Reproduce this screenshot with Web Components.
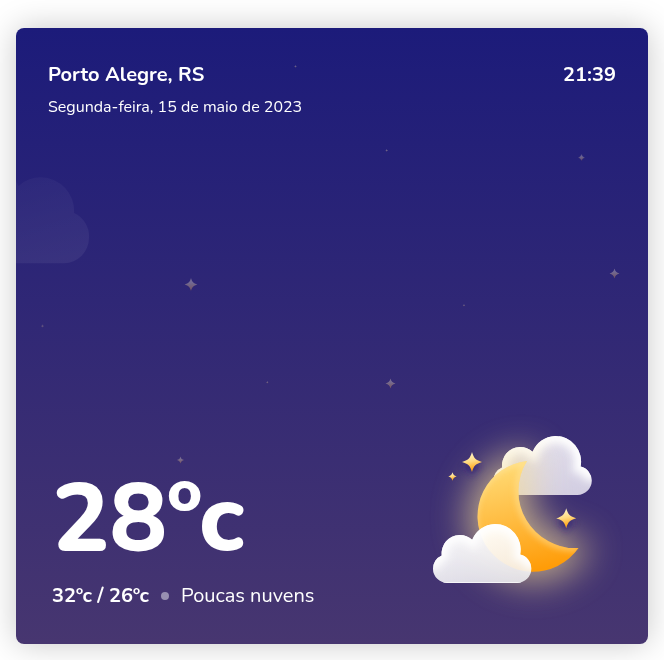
<!DOCTYPE html>
<html lang="pt-BR">
<head>
<meta charset="utf-8">
<meta name="viewport" content="width=device-width, initial-scale=1">
<title>Clima</title>
<style>
  * { box-sizing: border-box; }
  body {
    margin: 0;
    padding: 28px 16px 16px;
    min-height: 100vh;
    display: flex;
    background: #fff;
    color: #fff;
    font-family: Nunito, "Open Sans", "Noto Sans", sans-serif;
  }
</style>
</head>
<body>
<weather-card>
  <weather-sky slot="sky"></weather-sky>
  <weather-place slot="header">
    <span slot="city">Porto Alegre, RS</span>
    <span slot="date">Segunda-feira, 15 de maio de 2023</span>
    <time slot="time" datetime="21:39">21:39</time>
  </weather-place>
  <weather-now slot="now">
    <span slot="temp">28ºc</span>
    <span slot="range">32ºc / 26ºc</span>
    <span slot="summary">Poucas nuvens</span>
  </weather-now>
  <weather-icon slot="now"></weather-icon>
</weather-card>

<script>
const CLOUD = "M14.3 59 A14.3 14.3 0 0 1 0 44.8 A14.3 14.3 0 0 1 8.7 31.4 A18.4 18.4 0 0 1 26.3 11 A18.4 18.4 0 0 1 39.2 15.8 A25.6 25.6 0 0 1 61.7 0 A25.6 25.6 0 0 1 87.2 30.6 A14.3 14.3 0 0 1 98.3 44.8 A14.3 14.3 0 0 1 84 59 Z";
const CLOUD_TOP = "M0 44.8 A14.3 14.3 0 0 1 8.7 31.4 A18.4 18.4 0 0 1 26.3 11 A18.4 18.4 0 0 1 39.2 15.8 A25.6 25.6 0 0 1 61.7 0 A25.6 25.6 0 0 1 87.2 30.6 A14.3 14.3 0 0 1 98.3 44.8";
const MOON = "M527 461 A55.5 55.5 0 1 0 578.5 548 A57 57 0 0 1 527 461 Z";
const STAR = "M0 -10 C1.6 -4 4 -1.6 10 0 C4 1.6 1.6 4 0 10 C-1.6 4 -4 1.6 -10 0 C-4 -1.6 -1.6 -4 0 -10 Z";

function define(name, html) {
  const template = document.createElement("template");
  template.innerHTML = html;
  customElements.define(name, class extends HTMLElement {
    constructor() {
      super();
      this.attachShadow({ mode: "open" }).append(template.content.cloneNode(true));
    }
  });
}

define("weather-card", `
  <style>
    :host {
      position: relative;
      flex: 1;
      min-width: 0;
      display: flex;
      flex-direction: column;
      justify-content: space-between;
      gap: 32px;
      padding: 32px;
      border-radius: 8px;
      background: linear-gradient(#1c1b7a, #473670);
      box-shadow: 0 0 32px rgba(0, 0, 0, .22);
    }
    footer {
      display: flex;
      flex-wrap: wrap;
      justify-content: space-between;
      align-items: flex-end;
      gap: 16px;
    }
    header, footer { position: relative; }
  </style>
  <slot name="sky"></slot>
  <header><slot name="header"></slot></header>
  <footer><slot name="now"></slot></footer>
`);

const skyStars = [
  [191, 284.5, 6.4], [614.5, 273.5, 5], [390.5, 383.5, 5], [581.5, 157.5, 3.4], [180.5, 460, 3.6],
  [295.5, 66.5, 1.4], [386.7, 150.5, 1.4], [464, 305.3, 1.4], [42.5, 326, 1.4], [267.3, 382.3, 1.4]
];
define("weather-sky", `
  <style>
    :host { position: absolute; inset: 0; overflow: hidden; border-radius: 8px; }
    svg { display: block; width: 100%; height: 100%; }
  </style>
  <svg viewBox="16 28 632 616" preserveAspectRatio="xMidYMid slice" aria-hidden="true">
    <defs>
      <linearGradient id="g" x1="0" y1="0" x2="0" y2="1">
        <stop offset=".35" stop-color="#fff3d0"/><stop offset="1" stop-color="#ffab2e"/>
      </linearGradient>
      <linearGradient id="haze" x1=".2" y1="0" x2=".5" y2="1">
        <stop offset="0" stop-color="#fff" stop-opacity=".03"/><stop offset="1" stop-color="#fff" stop-opacity=".06"/>
      </linearGradient>
    </defs>
    <path d="M0 263.3 V176 Q10 176 16 181 L18.5 186 A33.5 33.5 0 0 1 41 177.3 A33.5 33.5 0 0 1 74 213 A25.5 25.5 0 0 1 89 238 A25.5 25.5 0 0 1 64 263.3 Z" fill="url(#haze)"/>
    <g fill="url(#g)" opacity=".33">
      ${skyStars.map(([x, y, r]) => `<path d="${STAR}" transform="translate(${x} ${y}) scale(${r / 10})"/>`).join("")}
    </g>
  </svg>
`);

define("weather-place", `
  <style>
    :host { display: flex; justify-content: space-between; gap: 16px; }
    div { display: flex; flex-direction: column; gap: 4px; }
    slot { display: block; }
    .strong { font-size: 20px; line-height: 30px; font-weight: 700; }
    .date { font-size: 16px; line-height: 26px; }
  </style>
  <div>
    <slot class="strong" name="city"></slot>
    <slot class="date" name="date"></slot>
  </div>
  <slot class="strong" name="time"></slot>
`);

define("weather-now", `
  <style>
    :host { display: flex; flex-direction: column; gap: 12px; padding-left: 4px; }
    slot { display: block; }
    .temp { font-size: 96px; line-height: 98px; font-weight: 800; }
    div { display: flex; align-items: center; gap: 12px; font-size: 20px; line-height: 32px; }
    .range { font-weight: 700; }
    i { width: 8px; height: 8px; border-radius: 50%; background: #fff; opacity: .45; }
  </style>
  <slot class="temp" name="temp"></slot>
  <div>
    <slot class="range" name="range"></slot>
    <i></i>
    <slot name="summary"></slot>
  </div>
`);

define("weather-icon", `
  <style>
    :host { display: block; }
    svg { display: block; width: 196px; height: 188px; overflow: visible; }
  </style>
  <svg viewBox="420 424 196 188" role="img" aria-label="Lua com nuvens">
    <defs>
      <linearGradient id="moon" x1=".3" y1="0" x2=".5" y2="1">
        <stop offset="0" stop-color="#ffdc78"/><stop offset=".55" stop-color="#ffba3e"/><stop offset="1" stop-color="#ff9c08"/>
      </linearGradient>
      <linearGradient id="star" x1=".4" y1="0" x2=".6" y2="1">
        <stop offset=".1" stop-color="#fff0bd"/><stop offset=".45" stop-color="#ffdc84"/><stop offset=".85" stop-color="#ffa81c"/>
      </linearGradient>
      <linearGradient id="front" x1=".3" y1="0" x2=".8" y2="1">
        <stop offset=".2" stop-color="#fff" stop-opacity=".93"/><stop offset="1" stop-color="#f3f3f5" stop-opacity=".86"/>
      </linearGradient>
      <linearGradient id="back" x1=".3" y1="0" x2=".8" y2="1">
        <stop offset=".1" stop-color="#f4f2fa" stop-opacity=".9"/><stop offset="1" stop-color="#eeebf6" stop-opacity=".85"/>
      </linearGradient>
      <clipPath id="cloudClip"><path d="${CLOUD}"/></clipPath>
      <clipPath id="moonClip"><path d="${MOON}"/></clipPath>
      <filter id="glow" filterUnits="userSpaceOnUse" x="370" y="360" width="310" height="310"><feGaussianBlur stdDeviation="18"/></filter>
      <filter id="b4" filterUnits="userSpaceOnUse" x="-30" y="-30" width="160" height="120"><feGaussianBlur stdDeviation="4"/></filter>
      <filter id="b3" filterUnits="userSpaceOnUse" x="420" y="424" width="196" height="188"><feGaussianBlur stdDeviation="3"/></filter>
    </defs>
    <g transform="translate(493.4 436)">
      <path d="${CLOUD}" fill="url(#back)"/>
      <g clip-path="url(#cloudClip)">
        <path d="${CLOUD_TOP}" fill="none" stroke="#fff" stroke-width="14" filter="url(#b4)"/>
      </g>
    </g>
    <path d="${MOON}" fill="#f8df92" stroke="#f8df92" stroke-width="20" stroke-linejoin="round" filter="url(#glow)" opacity=".68"/>
    <path d="${MOON}" fill="url(#moon)"/>
    <g clip-path="url(#moonClip)">
      <path d="M486 550 A55.5 55.5 0 0 1 527 461 A57 57 0 0 0 578.5 548" fill="none" stroke="#ffe9a8" stroke-width="6" filter="url(#b3)" opacity=".55"/>
    </g>
    <g transform="translate(433 524)">
      <path d="${CLOUD}" fill="url(#front)"/>
      <g clip-path="url(#cloudClip)">
        <path d="${CLOUD_TOP}" fill="none" stroke="#fff" stroke-width="12" filter="url(#b4)"/>
        <path d="M10 58.5 H88" stroke="#fff" stroke-width="1" opacity=".7"/>
      </g>
    </g>
    <g fill="#2b1f78" filter="url(#b3)" opacity=".8">
      <path d="${STAR}" transform="translate(472 467)"/>
      <path d="${STAR}" transform="translate(566 523)"/>
    </g>
    <g fill="url(#star)">
      <path d="${STAR}" transform="translate(472 462)"/>
      <path d="${STAR}" transform="translate(452.5 476.5) scale(.42)"/>
      <path d="${STAR}" transform="translate(566.2 518.3)"/>
    </g>
  </svg>
`);
</script>
</body>
</html>
